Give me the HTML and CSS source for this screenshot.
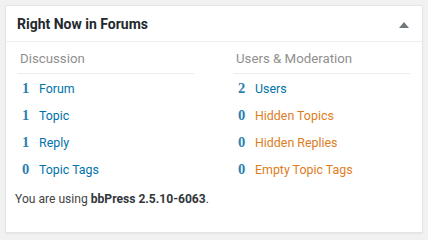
FILE: index.html
```html
<!DOCTYPE html>
<html lang="en">
<head>
    <title>Right Now in Forums</title>
    <link rel="stylesheet" href="styles.css">
</head>
<body>

<div class="postbox">
    <div class="postbox-header">
        <h2>Right Now in Forums</h2>
        <span class="toggle-arrow"></span>
    </div>
    <div class="inside">
        <div class="columns">
            <div class="table">
                <p class="sub">Discussion</p>
                <div class="row"><span class="num">1</span><a href="#">Forum</a></div>
                <div class="row"><span class="num">1</span><a href="#">Topic</a></div>
                <div class="row"><span class="num">1</span><a href="#">Reply</a></div>
                <div class="row"><span class="num">0</span><a href="#">Topic Tags</a></div>
            </div>
            <div class="table">
                <p class="sub">Users &amp; Moderation</p>
                <div class="row"><span class="num">2</span><a href="#">Users</a></div>
                <div class="row"><span class="num">0</span><a href="#" class="waiting">Hidden Topics</a></div>
                <div class="row"><span class="num">0</span><a href="#" class="waiting">Hidden Replies</a></div>
                <div class="row"><span class="num">0</span><a href="#" class="waiting">Empty Topic Tags</a></div>
            </div>
        </div>
        <p class="versions">You are using <strong>bbPress 2.5.10-6063</strong>.</p>
    </div>
</div>

</body>
</html>
```

FILE: styles.css
```css
body {
    font-family: Roboto, "Liberation Sans", sans-serif;
    margin: 0;
    padding: 5px;
    background-color: #f1f1f1;
    color: #444;
}
.postbox {
    background-color: #fff;
    border: 1px solid #e5e5e5;
    box-shadow: 0 1px 1px rgba(0,0,0,0.04);
    height: 228px;
    box-sizing: border-box;
}
.postbox-header {
    display: flex;
    justify-content: space-between;
    align-items: center;
    height: 35px;
    padding: 0 13px 0 11px;
    border-bottom: 1px solid #eee;
}
.postbox-header h2 {
    margin: 0;
    font-size: 14px;
    font-weight: bold;
    color: #23282d;
}
.toggle-arrow {
    width: 0;
    height: 0;
    border-left: 5px solid transparent;
    border-right: 5px solid transparent;
    border-bottom: 6px solid #72777c;
    margin-top: 2px;
}
.inside {
    padding: 0 12px 0 11px;
}
.columns {
    display: flex;
    justify-content: space-between;
}
.table {
    width: 177px;
}
.sub {
    margin: 0;
    padding: 9px 0 7px 3px;
    font-size: 13.25px;
    color: #8f8f8f;
    border-bottom: 1px solid #ececec;
}
.row {
    display: flex;
    align-items: center;
    height: 27px;
    padding-left: 5px;
}
.row:nth-child(2) {
    margin-top: 1px;
}
.num {
    font-family: "Liberation Serif", Georgia, serif;
    font-size: 14.5px;
    font-weight: bold;
    color: #2a7fb0;
    width: 17px;
}
.row a {
    font-size: 12.4px;
    color: #0073aa;
    text-decoration: none;
}
.row a.waiting {
    color: #de7d1e;
}
.versions {
    margin: 9px 0 0 -2px;
    font-size: 12.1px;
    color: #444;
}
.versions strong {
    color: #32373c;
}
```
